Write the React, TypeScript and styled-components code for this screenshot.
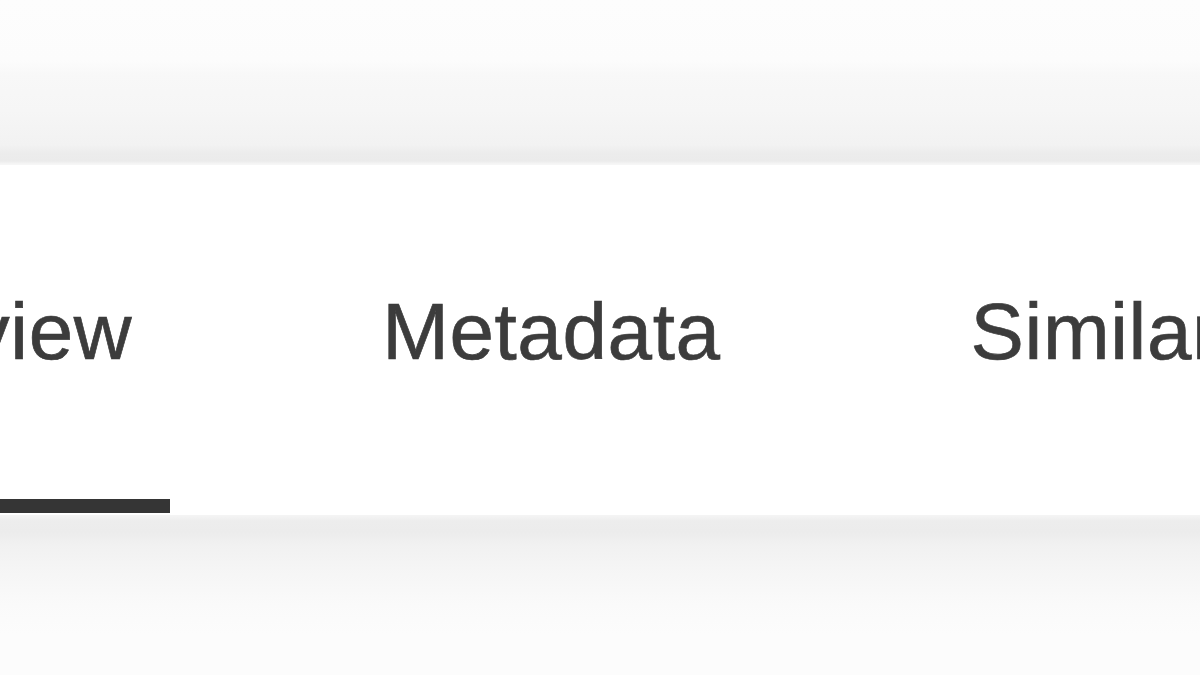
import styled, { createGlobalStyle } from "styled-components";

const GlobalStyle = createGlobalStyle`
    html, body {
        margin: 0;
        padding: 0;
        background: #fcfcfc;
        overflow: hidden;
    }
    #root {
        height: 675px;
    }
`;

const Page = styled.div`
    display: flex;
    flex-direction: column;
    width: 1200px;
    height: 675px;
    overflow: hidden;
    font-family: "Liberation Sans", Arial, sans-serif;
`;

const Header = styled.header`
    height: 165px;
    flex-shrink: 0;
    background: linear-gradient(
        to bottom,
        #fdfdfd 0px,
        #fcfcfc 60px,
        #f8f8f8 75px,
        #f6f6f6 110px,
        #f2f2f2 145px,
        #ececec 153px,
        #ebebeb 161px,
        #f6f6f6 164px
    );
`;

const TabBar = styled.nav`
    height: 350px;
    flex-shrink: 0;
    background: #ffffff;
    overflow: hidden;
`;

const TabList = styled.ul`
    display: flex;
    align-items: flex-end;
    gap: 174px;
    height: 100%;
    margin: 0 0 0 -244px;
    padding: 0;
    list-style: none;
    box-sizing: border-box;
`;

const Tab = styled.li<{ $active?: boolean }>`
    display: flex;
    flex-direction: column;
    justify-content: flex-end;
    flex-shrink: 0;
    height: 100%;
    padding: 129px 38px 0;
    box-sizing: border-box;
    border-bottom: 14px solid ${(p) => (p.$active ? "#353535" : "transparent")};
    margin-bottom: 2px;
    cursor: pointer;
`;

const Label = styled.span`
    display: block;
    font-size: 80px;
    line-height: 80px;
    letter-spacing: 0.6px;
    color: #3c3c3c;
    -webkit-text-stroke: 0.7px #3c3c3c;
    white-space: nowrap;
    margin-bottom: auto;
`;

const Content = styled.main`
    flex: 1;
    background: linear-gradient(
        to bottom,
        #f5f5f5 0px,
        #ededed 6px,
        #ececec 17px,
        #f1f1f1 30px,
        #f6f6f6 60px,
        #fafafa 90px,
        #fcfcfc 120px
    );
`;

const tabs = ["Overview", "Metadata", "Similar"];

export default function App() {
    return <Page>
        <GlobalStyle />
        <Header />
        <TabBar>
            <TabList>
                {tabs.map((t, i) => <Tab key={t} $active={i === 0}>
                    <Label>{t}</Label>
                </Tab>)}
            </TabList>
        </TabBar>
        <Content />
    </Page>;
}
